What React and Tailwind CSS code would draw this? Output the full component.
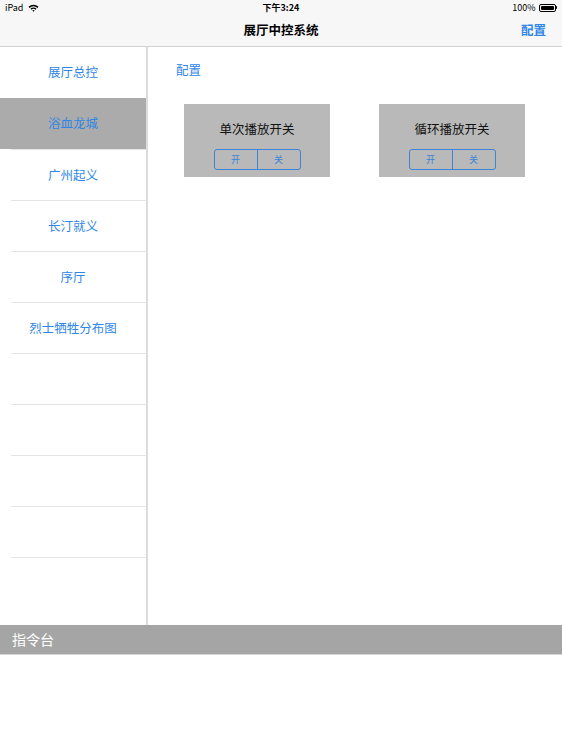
const font = { fontFamily: '"Noto Sans CJK SC", "Noto Sans", sans-serif' };

const menu = ["展厅总控", "浴血龙城", "广州起义", "长汀就义", "序厅", "烈士牺牲分布图", "", "", "", ""];

const Wifi = () => (
  <svg width="11" height="8" viewBox="0 0 11 8" className="ml-[5px]">
    <path d="M0.5 2.8 A7 7 0 0 1 10.5 2.8 L9.4 3.9 A5.4 5.4 0 0 0 1.6 3.9 Z" fill="#000" />
    <path d="M2.4 4.7 A4.4 4.4 0 0 1 8.6 4.7 L7.5 5.8 A2.8 2.8 0 0 0 3.5 5.8 Z" fill="#000" />
    <path d="M4.3 6.6 A1.7 1.7 0 0 1 6.7 6.6 L5.5 7.8 Z" fill="#000" />
  </svg>
);

const Battery = () => (
  <div className="flex items-center ml-[3px]">
    <div className="w-[17px] h-[8px] border border-black rounded-[2px] p-[1px]">
      <div className="w-full h-full bg-black rounded-[1px]" />
    </div>
    <div className="w-[1.5px] h-[3px] bg-black rounded-r-sm" />
  </div>
);

const SwitchCard = ({ title }) => (
  <div className="w-[146px] h-[73px] bg-[#b9b9b9] flex flex-col items-center">
    <div className="mt-[17px] text-[12.5px] leading-[16px] text-[#111]">{title}</div>
    <div className="mt-[12px] flex w-[87px] h-[21px] border border-[#3d84d8] rounded-[3px] text-[#3d84d8] text-[9px]">
      <div className="flex-1 flex items-center justify-center border-r border-[#3d84d8]">开</div>
      <div className="flex-1 flex items-center justify-center">关</div>
    </div>
  </div>
);

export default function App() {
  return (
    <div className="w-[562px] h-[750px] bg-white flex flex-col overflow-hidden" style={font}>
      {/* status bar */}
      <div className="h-[15px] bg-[#f7f7f7] flex items-center px-[5px] text-[9px] text-black relative">
        <div className="flex items-center">
          <span>iPad</span>
          <Wifi />
        </div>
        <div className="absolute left-0 right-0 text-center font-semibold">下午3:24</div>
        <div className="ml-auto flex items-center">
          <span>100%</span>
          <Battery />
        </div>
      </div>
      {/* nav bar */}
      <div className="h-[32px] bg-[#f7f7f7] border-b border-[#d2d2d2] flex items-center justify-center relative">
        <span className="text-[12.5px] font-semibold text-black">展厅中控系统</span>
        <span className="absolute right-[16px] text-[12.5px] font-semibold text-[#2f86e6]">配置</span>
      </div>
      {/* body */}
      <div className="flex h-[578px]">
        <div className="w-[148px] border-r-2 border-[#dcdcdc] flex flex-col">
          {menu.map((m, i) => (
            <div
              key={i}
              className={`h-[51px] shrink-0 flex items-center justify-center text-[12.5px] text-[#2f86e6] ${
                i === 1 ? "bg-[#ababab]" : ""
              } ${i === 0 || i === 1 ? "" : "ml-[11px] border-t border-[#e4e4e4] pr-[11px]"} ${i === 9 ? "border-b h-[52px]" : ""}`}
            >
              {m}
            </div>
          ))}
        </div>
        <div className="flex-1 flex flex-col">
          <div className="mt-[14px] ml-[28px] text-[12.5px] text-[#2f86e6]">配置</div>
          <div className="mt-[24px] ml-[36px] flex gap-[49px]">
            <SwitchCard title="单次播放开关" />
            <SwitchCard title="循环播放开关" />
          </div>
        </div>
      </div>
      {/* command bar */}
      <div className="h-[30px] bg-[#a5a5a5] border-b border-[#d4d4d4] flex items-center px-[12px] text-[14px] text-white">
        指令台
      </div>
      <div className="flex-1 bg-white" />
    </div>
  );
}
